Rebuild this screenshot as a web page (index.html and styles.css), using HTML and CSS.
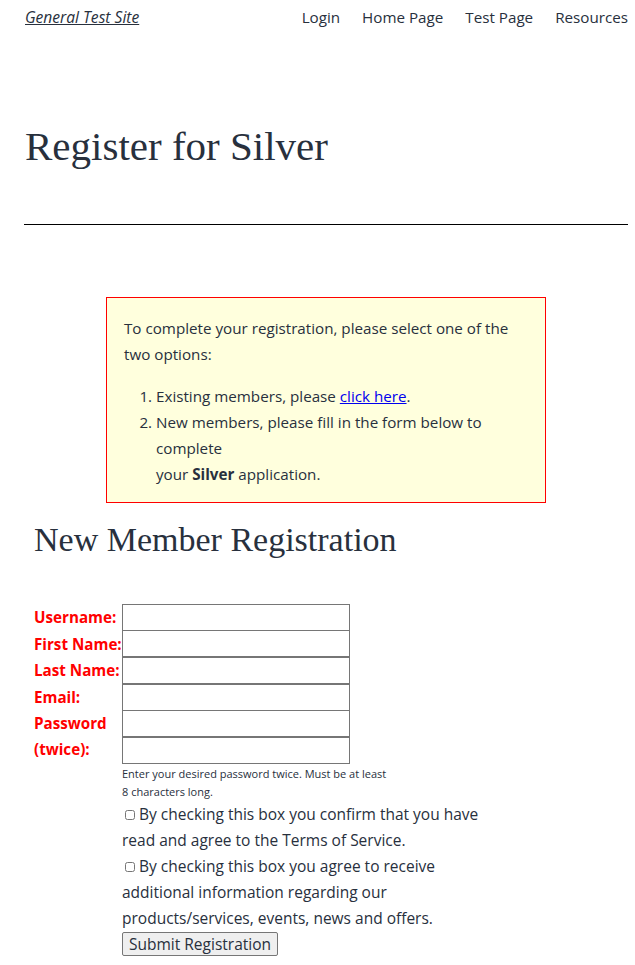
FILE: index.html
```html
<!DOCTYPE html>
<html lang="en">
<head>
  <meta charset="UTF-8" />
  <title>Register for Silver – General Test Site</title>
  <link rel="stylesheet" href="styles.css">
</head>
<body>

  <header class="site-header">
    <a href="#" class="site-title">General Test Site</a>
    <nav class="main-nav">
      <a href="#">Login</a>
      <a href="#">Home Page</a>
      <a href="#">Test Page</a>
      <a href="#">Resources</a>
    </nav>
  </header>

  <main class="content">
    <h1 class="entry-title">Register for Silver</h1>
    <hr class="title-rule">

    <div class="notice">
      <p>To complete your registration, please select one of the two options:</p>
      <ol>
        <li>Existing members, please <a href="#">click here</a>.</li>
        <li>New members, please fill in the form below to complete<br>your <b>Silver</b> application.</li>
      </ol>
    </div>

    <h2 class="form-title">New Member Registration</h2>

    <form class="reg-form">
      <div class="fields">
        <label for="username">Username:</label>
        <input type="text" id="username">
        <label for="first">First Name:</label>
        <input type="text" id="first">
        <label for="last">Last Name:</label>
        <input type="text" id="last">
        <label for="email">Email:</label>
        <input type="text" id="email">
        <label for="pass1" class="tall">Password (twice):</label>
        <input type="password" id="pass1">
        <input type="password" id="pass2">
      </div>
      <div class="extras">
        <p class="help">Enter your desired password twice. Must be at least<br>8 characters long.</p>
        <p class="check"><input type="checkbox"> By checking this box you confirm that you have read and agree to the Terms of Service.</p>
        <p class="check"><input type="checkbox"> By checking this box you agree to receive additional information regarding our products/services, events, news and offers.</p>
        <button type="button">Submit Registration</button>
      </div>
    </form>
  </main>

</body>
</html>
```

FILE: styles.css
```css
body {
  margin: 0;
  font-family: 'Open Sans', sans-serif;
  font-size: 15.2px;
  color: #28303d;
  background: #fff;
}
.site-header {
  display: flex;
  justify-content: space-between;
  align-items: center;
  padding: 5px 7px 0 25px;
  height: 24px;
}
.site-title {
  font-style: italic;
  color: #28303d;
  font-size: 15.6px;
}
.main-nav {
  display: flex;
  gap: 22px;
}
.main-nav a {
  color: #28303d;
  text-decoration: none;
  font-size: 15.2px;
}
.content {
  padding: 0 7px 0 24px;
}
.entry-title {
  font-family: 'Liberation Serif', serif;
  font-weight: normal;
  font-size: 41px;
  margin: 88px 0 0 1px;
  line-height: 58px;
  color: #28303d;
}
.title-rule {
  border: none;
  border-top: 1px solid #000;
  margin: 49px 0 0;
}
.notice {
  width: 404px;
  margin: 72px auto 0;
  padding: 17px 17px 15px;
  background: #ffffdd;
  border: 1px solid #f00;
  line-height: 26px;
}
.notice p {
  margin: 0 0 16px;
}
.notice ol {
  margin: 0;
  padding-left: 32px;
}
.notice a {
  color: #00e;
}
.form-title {
  font-family: 'Liberation Serif', serif;
  font-weight: normal;
  font-size: 34px;
  margin: 15px 0 0 10px;
  line-height: 44px;
}
.reg-form {
  margin: 42px 0 0 10px;
}
.fields {
  display: grid;
  grid-template-columns: 88px 228px;
  grid-auto-rows: 26.6px;
  align-items: center;
}
.fields label {
  color: #f00;
  font-weight: bold;
  line-height: 26px;
}
.fields label.tall {
  grid-row: span 2;
  align-self: start;
}
.fields input {
  grid-column: 2;
  box-sizing: border-box;
  height: 27px;
  width: 228px;
  margin: 0;
  border: 1px solid #767676;
}
.extras {
  margin-left: 88px;
  width: 370px;
}
.help {
  font-size: 11px;
  line-height: 18px;
  margin: 1px 0 0;
}
.check {
  margin: 0;
  font-size: 15.5px;
  line-height: 26px;
}
.check input {
  width: 10px;
  height: 10px;
  margin: 0 0 0 3px;
}
button {
  font-family: 'Open Sans', sans-serif;
  font-size: 15.5px;
  color: #28303d;
  padding: 0 6px;
  border: 1px solid #767676;
  border-radius: 2px;
  background: #efefef;
  margin-top: 1px;
}
```
